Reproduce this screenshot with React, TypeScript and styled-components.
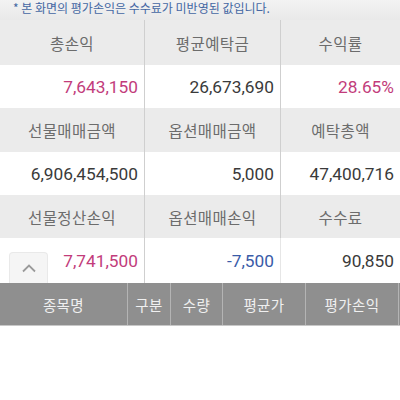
import React from "react";
import styled, { createGlobalStyle } from "styled-components";

const Global = createGlobalStyle`
  html, body { margin: 0; padding: 0; background: #ffffff; }
  body { font-family: Roboto, "Noto Sans CJK KR", sans-serif; }
  * { box-sizing: border-box; }
`;

const Page = styled.div`
  width: 400px;
  height: 400px;
  background: #ffffff;
  overflow: hidden;
  position: relative;
`;

const Note = styled.div`
  height: 20px;
  padding-left: 13px;
  font-family: "Noto Sans CJK KR", sans-serif;
  font-size: 12px;
  line-height: 16px;
  color: #4467a3;
  background: linear-gradient(#f3f3f3, #e9e9e9);
  white-space: nowrap;
`;

const Grid = styled.div`
  display: grid;
  grid-template-columns: 145px 136px 119px;
  position: relative;
`;

const HeadCell = styled.div<{ $h: number; $last?: boolean }>`
  height: ${(p) => p.$h}px;
  background: #ebebeb;
  display: flex;
  align-items: center;
  justify-content: center;
  font-family: "Noto Sans CJK KR", sans-serif;
  font-size: 15.5px;
  letter-spacing: 0.4px;
  color: #6c6c6c;
  border-right: ${(p) => (p.$last ? "none" : "1px solid #cfcfcf")};
`;

const ValueCell = styled.div<{ $h: number; $last?: boolean; $tone?: "pink" | "blue" | "dark"; $faint?: boolean }>`
  height: ${(p) => p.$h}px;
  background: #ffffff;
  display: flex;
  align-items: center;
  justify-content: flex-end;
  padding-right: 6px;
  font-family: Roboto, "Noto Sans CJK KR", sans-serif;
  font-size: 17.3px;
  color: ${(p) => (p.$tone === "pink" ? "#c23c7b" : p.$tone === "blue" ? "#3a5ba8" : "#3a3a3a")};
  border-right: ${(p) => (p.$last ? "none" : p.$faint ? "1px solid #e6e6e6" : "1px solid #cfcfcf")};
`;

const UpButton = styled.div`
  position: absolute;
  left: 9px;
  bottom: 0;
  width: 39px;
  height: 31px;
  background: #f5f5f5;
  border: 1px solid #e9e9e9;
  border-bottom: none;
  border-radius: 4px 4px 0 0;
  display: flex;
  align-items: center;
  justify-content: center;
`;

const TableHead = styled.div`
  display: grid;
  grid-template-columns: 128px 43px 52px 83px 93px;
  height: 43px;
  width: 400px;
  background: #8f8f8f;
  border-bottom: 1px solid #c8c8c8;
`;

const ThCell = styled.div`
  display: flex;
  align-items: center;
  justify-content: center;
  font-family: "Noto Sans CJK KR", sans-serif;
  font-size: 14.5px;
  letter-spacing: 0.4px;
  color: #f0f0f0;
  border-right: 1px solid #b4b4b4;
`;

type Tone = "pink" | "blue" | "dark";
const sections: { heads: string[]; values: [string, Tone][]; hh: number; vh: number }[] = [
  {
    heads: ["총손익", "평균예탁금", "수익률"],
    values: [["7,643,150", "pink"], ["26,673,690", "dark"], ["28.65%", "pink"]],
    hh: 45,
    vh: 43,
  },
  {
    heads: ["선물매매금액", "옵션매매금액", "예탁총액"],
    values: [["6,906,454,500", "dark"], ["5,000", "dark"], ["47,400,716", "dark"]],
    hh: 44,
    vh: 43,
  },
  {
    heads: ["선물정산손익", "옵션매매손익", "수수료"],
    values: [["7,741,500", "pink"], ["-7,500", "blue"], ["90,850", "dark"]],
    hh: 43,
    vh: 45,
  },
];

export default function App() {
  return (
    <Page>
      <Global />
      <Note>* 본 화면의 평가손익은 수수료가 미반영된 값입니다.</Note>
      {sections.map((s, si) => (
        <Grid key={si}>
          {s.heads.map((h, i) => (
            <HeadCell key={"h" + i} $h={s.hh} $last={i === 2}>
              {h}
            </HeadCell>
          ))}
          {s.values.map(([v, t], i) => (
            <ValueCell key={"v" + i} $h={s.vh} $last={i === 2} $tone={t} $faint={si === 2 && i === 1}>
              {v}
            </ValueCell>
          ))}
          {si === 2 && (
            <UpButton>
              <svg width="16" height="10" viewBox="0 0 16 10">
                <polyline points="2,8.5 8,2.5 14,8.5" fill="none" stroke="#9a9a9a" strokeWidth="1.8" />
              </svg>
            </UpButton>
          )}
        </Grid>
      ))}
      <TableHead>
        {["종목명", "구분", "수량", "평균가", "평가손익"].map((t, i) => (
          <ThCell key={i}>{t}</ThCell>
        ))}
      </TableHead>
    </Page>
  );
}
